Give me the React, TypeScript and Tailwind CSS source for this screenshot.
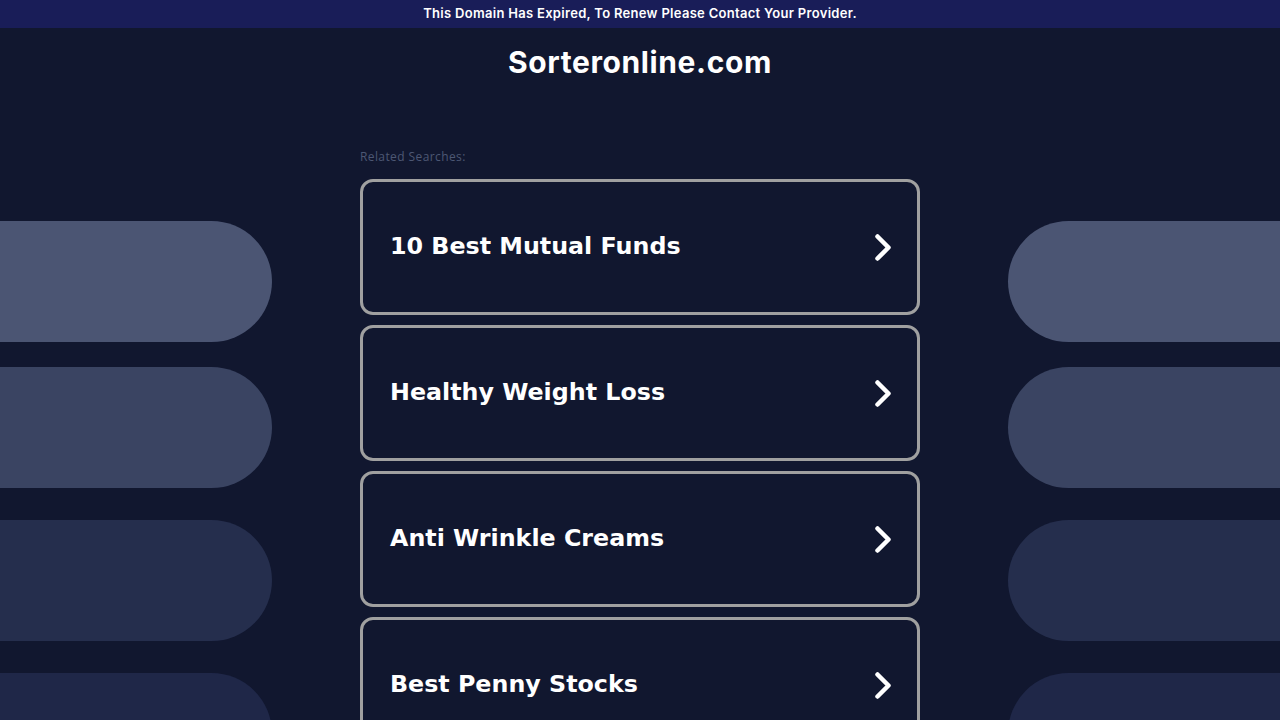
const searches = ['10 Best Mutual Funds', 'Healthy Weight Loss', 'Anti Wrinkle Creams', 'Best Penny Stocks'];

const pills = [
  { color: 'bg-[#4b5573]', gap: 'mt-0' },
  { color: 'bg-[#3a4462]', gap: 'mt-[25px]' },
  { color: 'bg-[#252e4d]', gap: 'mt-[32px]' },
  { color: 'bg-[#1f2748]', gap: 'mt-[32px]' },
];

function PillColumn({ side }: { side: 'left' | 'right' }) {
  return (
    <div className="w-[272px] shrink-0 flex flex-col pt-[121px]">
      {pills.map((p, i) => (
        <div
          key={i}
          className={`h-[121px] ${p.color} ${p.gap} ${side === 'left' ? 'rounded-r-full' : 'rounded-l-full'}`}
        />
      ))}
    </div>
  );
}

function Chevron() {
  return (
    <svg width="16" height="27" viewBox="0 0 16 27" fill="none">
      <polyline
        points="2.5,2.5 13.5,13.5 2.5,24.5"
        stroke="white"
        strokeWidth="4.5"
        strokeLinecap="round"
        strokeLinejoin="round"
      />
    </svg>
  );
}

export default function App() {
  return (
    <div className="h-[720px] overflow-hidden bg-[#11172f] text-white" style={{ fontFamily: 'Inter, "Open Sans", sans-serif' }}>
      {/* Expired banner */}
      <div className="h-[28px] bg-[#191d58] flex items-center justify-center text-[13px] font-semibold tracking-[0.3px]">
        This Domain Has Expired, To Renew Please Contact Your Provider.
      </div>

      {/* Title */}
      <div className="h-[72px] flex justify-center pt-[15px]">
        <h1 className="text-[30px] font-bold leading-[38px] tracking-[0.6px]">Sorteronline.com</h1>
      </div>

      <div className="flex justify-between">
        <PillColumn side="left" />

        <div className="w-[560px] shrink-0 pt-[49px]">
          <div
            className="text-[12px] leading-[16px] tracking-[0.4px] text-[#4d5774] mb-[14px]"
            style={{ fontFamily: '"Open Sans", sans-serif' }}
          >
            Related Searches:
          </div>
          <div className="flex flex-col gap-[10px]">
            {searches.map((s) => (
              <div
                key={s}
                className="h-[136px] border-[3px] border-[#a0a0a0] rounded-[13px] flex items-center justify-between pl-[27px] pr-[26px]"
              >
                <span className="text-[23.75px] font-bold" style={{ fontFamily: '"DejaVu Sans", sans-serif' }}>
                  {s}
                </span>
                <Chevron />
              </div>
            ))}
          </div>
        </div>

        <PillColumn side="right" />
      </div>
    </div>
  );
}
